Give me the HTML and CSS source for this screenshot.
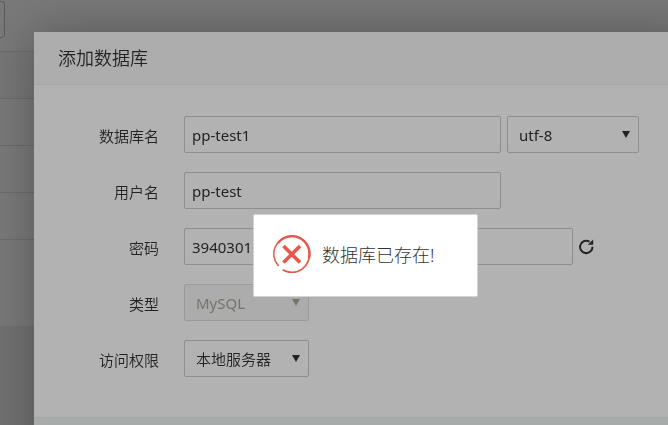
FILE: index.html
```html
<!DOCTYPE html>
<html lang="zh-CN">
<head>
    <meta charset="UTF-8">
    <meta name="viewport" content="width=device-width, initial-scale=1.0">
    <title>添加数据库</title>
    <link rel="stylesheet" href="styles.css">
</head>
<body>
    <div class="page">
        <div class="toolbar"><div class="toolbar-box"></div></div>
        <div class="list">
            <div class="list-row list-head"></div>
            <div class="list-row"></div>
            <div class="list-row"></div>
            <div class="list-row"></div>
            <div class="list-foot"></div>
        </div>
    </div>

    <div class="shade"></div>

    <div class="dialog" role="dialog" aria-labelledby="dialog-title">
        <h2 class="dialog-title" id="dialog-title">添加数据库</h2>
        <form class="form">
            <div class="row">
                <label class="row-label" for="name">数据库名</label>
                <input class="field" id="name" type="text" value="pp-test1">
                <span class="select select-code">
                    <select id="code" aria-label="编码">
                        <option>utf-8</option>
                    </select>
                </span>
            </div>
            <div class="row">
                <label class="row-label" for="user">用户名</label>
                <input class="field" id="user" type="text" value="pp-test">
            </div>
            <div class="row">
                <label class="row-label" for="password">密码</label>
                <input class="field field-wide" id="password" type="text" value="3940301">
                <button class="refresh" type="button" aria-label="随机密码">
                    <svg width="16" height="16" viewBox="0 0 16 16">
                        <path d="M13.5 7.8A6.2 6.2 0 1 1 10.5 2.6" fill="none" stroke="currentColor" stroke-width="2"/>
                        <path d="M14.2 .5V5.8H8.8L11 3.6Z" fill="currentColor"/>
                    </svg>
                </button>
            </div>
            <div class="row">
                <label class="row-label" for="type">类型</label>
                <span class="select select-off">
                    <select id="type" disabled>
                        <option>MySQL</option>
                    </select>
                </span>
            </div>
            <div class="row">
                <label class="row-label" for="access">访问权限</label>
                <span class="select select-access">
                    <select id="access">
                        <option>本地服务器</option>
                    </select>
                </span>
            </div>
        </form>
        <div class="dialog-foot"></div>
    </div>

    <div class="shade"></div>

    <div class="message" role="alert">
        <svg class="message-icon" width="38" height="38" viewBox="0 0 38 38" fill="none" stroke="#e9574c">
            <path d="M5.5 31A17.6 17.6 0 0 1 18.5 1.4" stroke-width="1.5"/>
            <path d="M5 8A17.6 17.6 0 0 1 36 23" stroke-width="2.4"/>
            <path d="M36 16A17.6 17.6 0 0 1 9.6 34.8" stroke-width="1.7"/>
            <path d="M10.5 11L27 27.5M27 11L10.5 27.5" stroke-width="3.6"/>
        </svg>
        <span class="message-text">数据库已存在!</span>
    </div>
</body>
</html>
```
FILE: styles.css
```css
* {
    box-sizing: border-box;
}
body {
    margin: 0;
    min-height: 100vh;
    overflow: hidden;
    background: #eaeaea;
    color: #333;
    font-family: "Noto Sans", "Noto Sans CJK SC", sans-serif;
    font-size: 15px;
}
input,
select,
button {
    font: inherit;
    color: inherit;
}

/* page behind the dialog */
.page {
    background: #fafafa;
}
.toolbar {
    height: 51px;
    padding-top: 1px;
}
.toolbar-box {
    width: 5px;
    height: 37px;
    border: 1px solid #bbb;
    border-left: 0;
    border-radius: 0 4px 4px 0;
}
.list {
    border-top: 1px solid #ddd;
}
.list-row {
    height: 47px;
    border-bottom: 1px solid #ddd;
}
.list-head {
    background: #f4f4f4;
}
.list-foot {
    height: 86px;
}
.shade {
    position: fixed;
    inset: 0;
    background: rgba(0,0,0,0.3);
}

/* dialog */
.dialog {
    position: absolute;
    top: 32px;
    left: 34px;
    right: -32px;
    background: #fff;
    border-radius: 2px;
    box-shadow: 1px 1px 50px rgba(0,0,0,0.3);
}
.dialog-title {
    margin: 0;
    padding: 0 24px;
    line-height: 52px;
    border-bottom: 1px solid #eee;
    background: #f8f8f8;
    font-size: 18px;
    font-weight: 350;
}
.form {
    display: flex;
    flex-direction: column;
    gap: 19px;
    padding: 31px 24px 40px 0;
}
.row {
    display: flex;
    align-items: center;
    height: 37px;
}
.row-label {
    width: 125px;
    margin-right: 25px;
    padding-top: 2px;
    text-align: right;
    font-family: "Noto Sans CJK SC", sans-serif;
    font-weight: 350;
}
.field {
    width: 317px;
    height: 37px;
    margin-right: 6px;
    padding: 1px 7px;
    border: 1px solid #ccc;
    border-radius: 2px;
    background: #fff;
}
.field-wide {
    width: 389px;
}
.select {
    position: relative;
    width: 125px;
}
.select-code {
    width: 132px;
}
.select-access {
    font-weight: 350;
}
.select select {
    display: block;
    width: 100%;
    height: 37px;
    padding: 1px 24px 1px 11px;
    border: 1px solid #ccc;
    border-radius: 2px;
    background: #fff;
    appearance: none;
}
.select::after {
    content: "";
    position: absolute;
    top: 15px;
    right: 9px;
    border: 4px solid transparent;
    border-top: 7px solid #333;
    border-bottom: 0;
    pointer-events: none;
}
.select-off {
    color: #aaa796;
}
.select-off select {
    background: #f6f6f6;
    border-color: #ddd;
    opacity: 1;
}
.select-off::after {
    border-top-color: #aaa796;
}
.refresh {
    display: flex;
    padding: 0;
    border: 0;
    background: none;
    cursor: pointer;
}
.dialog-foot {
    height: 60px;
    border-top: 1px solid #edf1f2;
    background: #f0f5f4;
}

/* message box */
.message {
    position: absolute;
    top: 214px;
    left: 253px;
    display: flex;
    align-items: center;
    gap: 11px;
    padding: 20px 43px 23px 19px;
    border: 1px solid #d3d4d3;
    border-radius: 2px;
    background: #fff;
    font-size: 18px;
    font-weight: 300;
    line-height: 38px;
    white-space: nowrap;
}
.message-icon {
    flex: none;
}
.message-text {
    padding-top: 2px;
    line-height: 36px;
}
```
